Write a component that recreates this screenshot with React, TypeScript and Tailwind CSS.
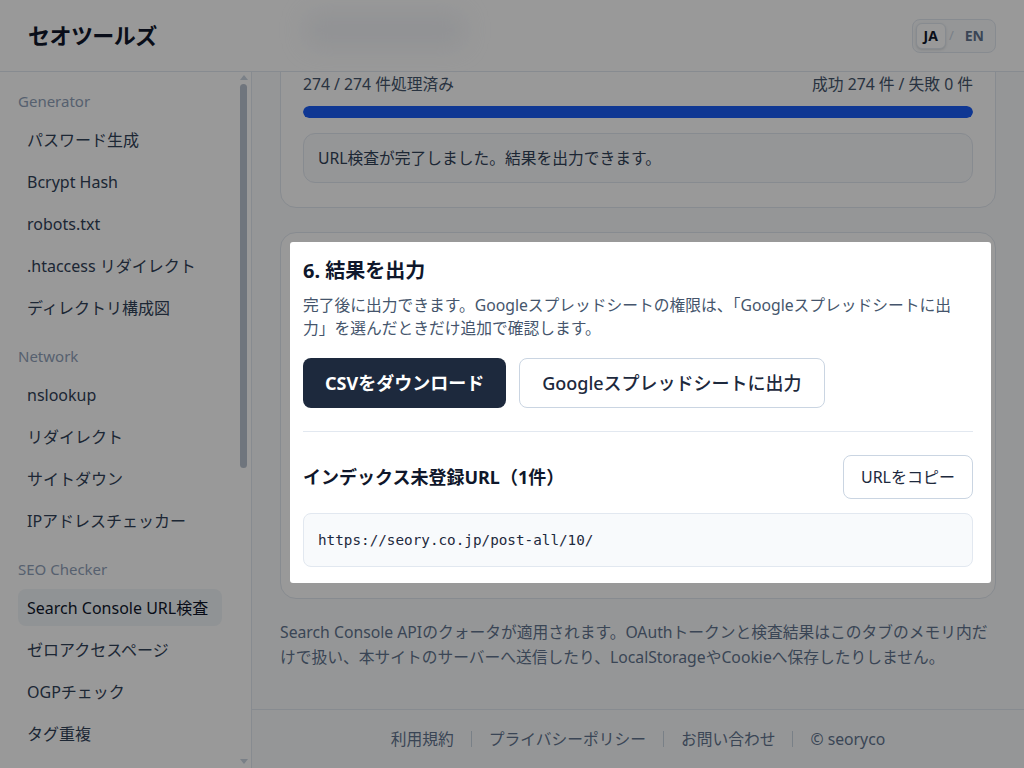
import React from "react";

type Section = { title: string; items: string[] };

const NAV: Section[] = [
  {
    title: "Generator",
    items: ["パスワード生成", "Bcrypt Hash", "robots.txt", ".htaccess リダイレクト", "ディレクトリ構成図"],
  },
  {
    title: "Network",
    items: ["nslookup", "リダイレクト", "サイトダウン", "IPアドレスチェッカー"],
  },
  {
    title: "SEO Checker",
    items: ["Search Console URL検査", "ゼロアクセスページ", "OGPチェック", "タグ重複"],
  },
];

const ACTIVE = "Search Console URL検査";

function Header() {
  return (
    <header className="flex h-[72px] shrink-0 items-center justify-between border-b border-slate-200 bg-white px-7">
      <div className="text-[22px] font-bold tracking-tight text-slate-900">セオツールズ</div>
      <div className="flex items-center rounded-lg border border-slate-200 bg-slate-50 p-[3px]">
        <button className="h-[26px] rounded-md border border-slate-200 bg-white px-[7px] text-[14px] font-bold text-slate-900 shadow-sm">
          JA
        </button>
        <span className="px-[3px] text-[13px] text-slate-300">/</span>
        <button className="h-[26px] px-2 text-[14px] font-bold text-slate-500">EN</button>
      </div>
    </header>
  );
}

function Sidebar() {
  return (
    <aside className="relative h-full w-[252px] shrink-0 border-r border-slate-200 bg-white">
      <nav className="h-full overflow-hidden pb-6 pl-[18px] pr-[29px] pt-[18px]">
        {NAV.map((sec, i) => (
          <div key={sec.title} className={i === 0 ? "" : "mt-[19px]"}>
            <div className="mb-[9px] h-[22px] text-[15px] leading-[22px] text-slate-400">{sec.title}</div>
            <ul className="flex flex-col gap-[5px]">
              {sec.items.map((item) => (
                <li
                  key={item}
                  className={
                    "flex h-[37px] items-center rounded-lg px-[9px] text-[16px] " +
                    (item === ACTIVE ? "bg-slate-100 text-slate-900" : "text-slate-700")
                  }
                >
                  {item}
                </li>
              ))}
            </ul>
          </div>
        ))}
      </nav>

      {/* scrollbar of the nav list */}
      <div className="pointer-events-none absolute bottom-0 right-[1px] top-0 flex w-[13px] flex-col items-center">
        <svg width="8" height="5" viewBox="0 0 8 5" className="mt-[3px]">
          <path d="M4 0 L8 5 L0 5 Z" fill="#cbd5e1" />
        </svg>
        <div className="mt-[4px] h-[384px] w-[7px] rounded-full bg-[#bac3d0]" />
        <div className="flex-1" />
        <svg width="8" height="5" viewBox="0 0 8 5" className="mb-[4px]">
          <path d="M0 0 L8 0 L4 5 Z" fill="#cbd5e1" />
        </svg>
      </div>
    </aside>
  );
}

function ProgressCard() {
  return (
    <section className="shrink-0 rounded-2xl border border-slate-200 bg-white px-[22px] pb-6 pt-6">
      <h2 className="text-[20px] font-bold leading-7 text-slate-900">5. URL検査を実行</h2>
      <p className="mt-[9px] text-[15.75px] leading-[23px] text-slate-600">
        入力したURLを順番に検査します。処理中はこのタブを開いたままにしてください。
      </p>
      <div className="mt-5 flex justify-between text-[15.75px] leading-[22px] text-slate-600">
        <span>274 / 274 件処理済み</span>
        <span>成功 274 件 / 失敗 0 件</span>
      </div>
      <div className="mt-[11px] h-3 w-full overflow-hidden rounded-full bg-slate-100">
        <div className="h-full rounded-full bg-[#1a5cf5]" style={{ width: "100%" }} />
      </div>
      <div className="mt-[15px] rounded-xl border border-slate-200 bg-slate-50 px-[14px] py-[13px] text-[15.75px] leading-[22px] text-slate-700">
        URL検査が完了しました。結果を出力できます。
      </div>
    </section>
  );
}

function ExportCard() {
  return (
    <section className="mt-6 shrink-0 rounded-2xl border border-slate-200 bg-white px-[22px] pb-[31px] pt-6">
      <h2 className="text-[20px] font-bold leading-7 text-slate-900">6. 結果を出力</h2>
      <p className="mt-[9px] text-[15.75px] leading-[23px] text-slate-600">
        完了後に出力できます。Googleスプレッドシートの権限は、「Googleスプレッドシートに出力」を選んだときだけ追加で確認します。
      </p>
      <div className="mt-[18px] flex gap-[13px]">
        <button className="h-[50px] rounded-lg bg-slate-800 px-[22px] text-[18px] font-bold text-white">
          CSVをダウンロード
        </button>
        <button className="h-[50px] rounded-lg border border-slate-300 bg-white px-[22px] text-[18px] font-medium text-slate-800">
          Googleスプレッドシートに出力
        </button>
      </div>
      <div className="mt-[23px] border-t border-slate-200 pt-[23px]">
        <div className="flex h-[44px] items-center justify-between">
          <h3 className="text-[18px] font-bold text-slate-900">インデックス未登録URL（1件）</h3>
          <button className="h-[44px] rounded-lg border border-slate-300 bg-white px-[17px] text-[16px] text-slate-800">
            URLをコピー
          </button>
        </div>
        <div className="mt-[14px] rounded-lg border border-slate-200 bg-slate-50 px-[14px] py-4 font-['DejaVu_Sans_Mono',monospace] text-[14.3px] leading-5 text-slate-800">
          https://seory.co.jp/post-all/10/
        </div>
      </div>
    </section>
  );
}

function Footer() {
  const links = ["利用規約", "プライバシーポリシー", "お問い合わせ", "© seoryco"];
  return (
    <footer className="shrink-0 border-t border-slate-200 bg-slate-50 py-[18px]">
      <div className="flex items-center justify-center gap-[17px] text-[15.75px] leading-[22px] text-slate-500">
        {links.map((l, i) => (
          <React.Fragment key={l}>
            {i > 0 && <span className="h-4 w-px bg-slate-300" />}
            <span>{l}</span>
          </React.Fragment>
        ))}
      </div>
    </footer>
  );
}

export default function App() {
  return (
    <div className="relative flex h-[768px] w-full flex-col overflow-hidden bg-white font-['Noto_Sans','Noto_Sans_CJK_JP',sans-serif]">
      <Header />
      <div className="flex min-h-0 flex-1">
        <Sidebar />
        <main className="flex min-w-0 flex-1 flex-col justify-end overflow-hidden bg-slate-50">
          <div className="flex shrink-0 flex-col px-7 pb-[39px]">
            <ProgressCard />
            <ExportCard />
            <p className="mt-[21px] shrink-0 text-[15.75px] leading-[25px] text-slate-500">
              Search Console APIのクォータが適用されます。OAuthトークンと検査結果はこのタブのメモリ内だけで扱い、本サイトのサーバーへ送信したり、LocalStorageやCookieへ保存したりしません。
            </p>
          </div>
          <Footer />
        </main>
      </div>

      {/* fading toast behind the tour overlay */}
      <div className="pointer-events-none absolute left-[305px] top-[12px] h-[36px] w-[160px] rounded-xl bg-slate-300/25 blur-md" />

      {/* tour spotlight: dims everything except the export step */}
      <div className="pointer-events-none absolute left-[290px] top-[242px] h-[341px] w-[701px] rounded-[3px] shadow-[0_0_0_2400px_rgba(0,0,0,0.4)]" />
    </div>
  );
}
